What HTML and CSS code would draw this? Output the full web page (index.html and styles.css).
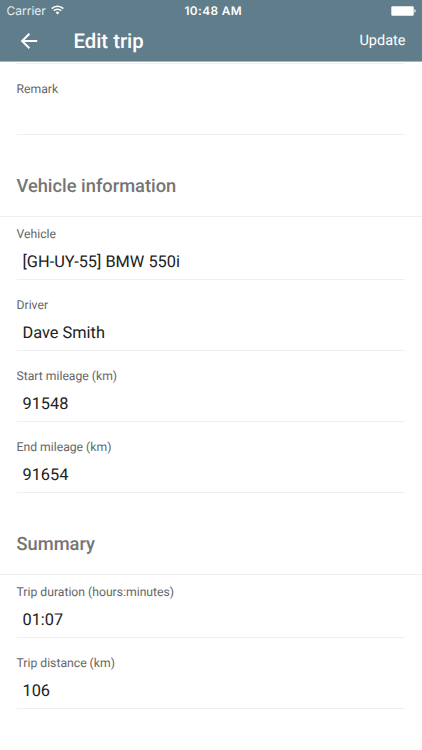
FILE: index.html
```html
<!DOCTYPE html>
<html lang="en">
<head>
<meta charset="utf-8">
<title>Edit trip</title>
<link rel="stylesheet" href="styles.css">
</head>
<body>
<header class="top">
  <div class="status">
    <div class="carrier"><span>Carrier</span>
      <svg class="wifi" width="13" height="10" viewBox="0 0 13 10" fill="none" stroke="#fff" stroke-width="1.6"><path d="M.7 3.6a8.2 8.2 0 0 1 11.6 0M2.8 5.8a5.2 5.2 0 0 1 7.4 0"/><path d="M4.6 7.5a2.7 2.7 0 0 1 3.8 0L6.5 9.5z" fill="#fff" stroke="none"/></svg>
    </div>
    <div class="time">10:48 AM</div>
    <svg class="battery" width="25" height="10" viewBox="0 0 25 10"><rect x=".3" y=".2" width="22.4" height="9.6" rx="1.2" fill="#fff"/><path d="M23.4 3.3q1.3.3 1.3 1.7t-1.3 1.7z" fill="#fff"/></svg>
  </div>
  <div class="bar">
    <svg class="back" width="18" height="18" viewBox="0 0 18 18" fill="none" stroke="#fff" stroke-width="2"><path d="M17.2 9H2.2M9.4 1.7L2.1 9l7.3 7.3"/></svg>
    <h1>Edit trip</h1>
    <div class="update">Update</div>
  </div>
</header>
<main>
  <div class="rule"></div>
  <div class="field"><label>Remark</label><div class="value"></div></div>
  <h2>Vehicle information</h2>
  <div class="field"><label>Vehicle</label><div class="value">[GH-UY-55] BMW 550i</div></div>
  <div class="field"><label>Driver</label><div class="value">Dave Smith</div></div>
  <div class="field"><label>Start mileage (km)</label><div class="value">91548</div></div>
  <div class="field"><label>End mileage (km)</label><div class="value">91654</div></div>
  <h2>Summary</h2>
  <div class="field"><label>Trip duration (hours:minutes)</label><div class="value">01:07</div></div>
  <div class="field"><label>Trip distance (km)</label><div class="value">106</div></div>
</main>
</body>
</html>
```
FILE: styles.css
```css
* { box-sizing: border-box; }
body { margin: 0; height: 750px; overflow: hidden; background: #fff; font-family: Roboto, sans-serif; color: #212121; text-rendering: geometricPrecision; }
.top { height: 62px; background: #607d8b; color: #fff; border-bottom: 1px solid #a5b5bd; }
.status { display: grid; grid-template-columns: 1fr auto 1fr; align-items: center; height: 22px; padding: 0 6px 0 6.5px; font-family: Inter, sans-serif; font-size: 12px; }
.carrier { display: flex; align-items: center; gap: 5px; height: 20px; margin-bottom: 2px; color: #e8edef; }
.time { padding-left: 4px; font-weight: 600; font-size: 11.8px; letter-spacing: .4px; }
.battery { justify-self: end; margin-bottom: 1px; }
.bar { display: flex; align-items: center; height: 38px; padding: 0 16.5px 0 20px; }
h1 { margin: 0 auto 0 35.5px; font-size: 20.3px; font-weight: 500; line-height: 38px; }
.update { font-size: 14.5px; line-height: 37px; height: 38px; }
.rule { height: 2px; margin: 0 17px 8px 16px; border-bottom: 1px solid #efefef; }
.field { height: 71.2px; padding: 9px 17px 0 16.5px; }
.field label { display: block; height: 16px; font-size: 12.2px; line-height: 16.6px; color: #666; }
.value { height: 38px; padding-left: 6px; border-bottom: 1px solid #efefef; font-size: 16.35px; line-height: 40.8px; }
h2 { height: 64px; margin: 9.4px 0 0; padding: 0 16.5px; border-bottom: 1px solid #efefef; font-size: 18.3px; font-weight: 500; line-height: 68px; color: #757575; }
```
